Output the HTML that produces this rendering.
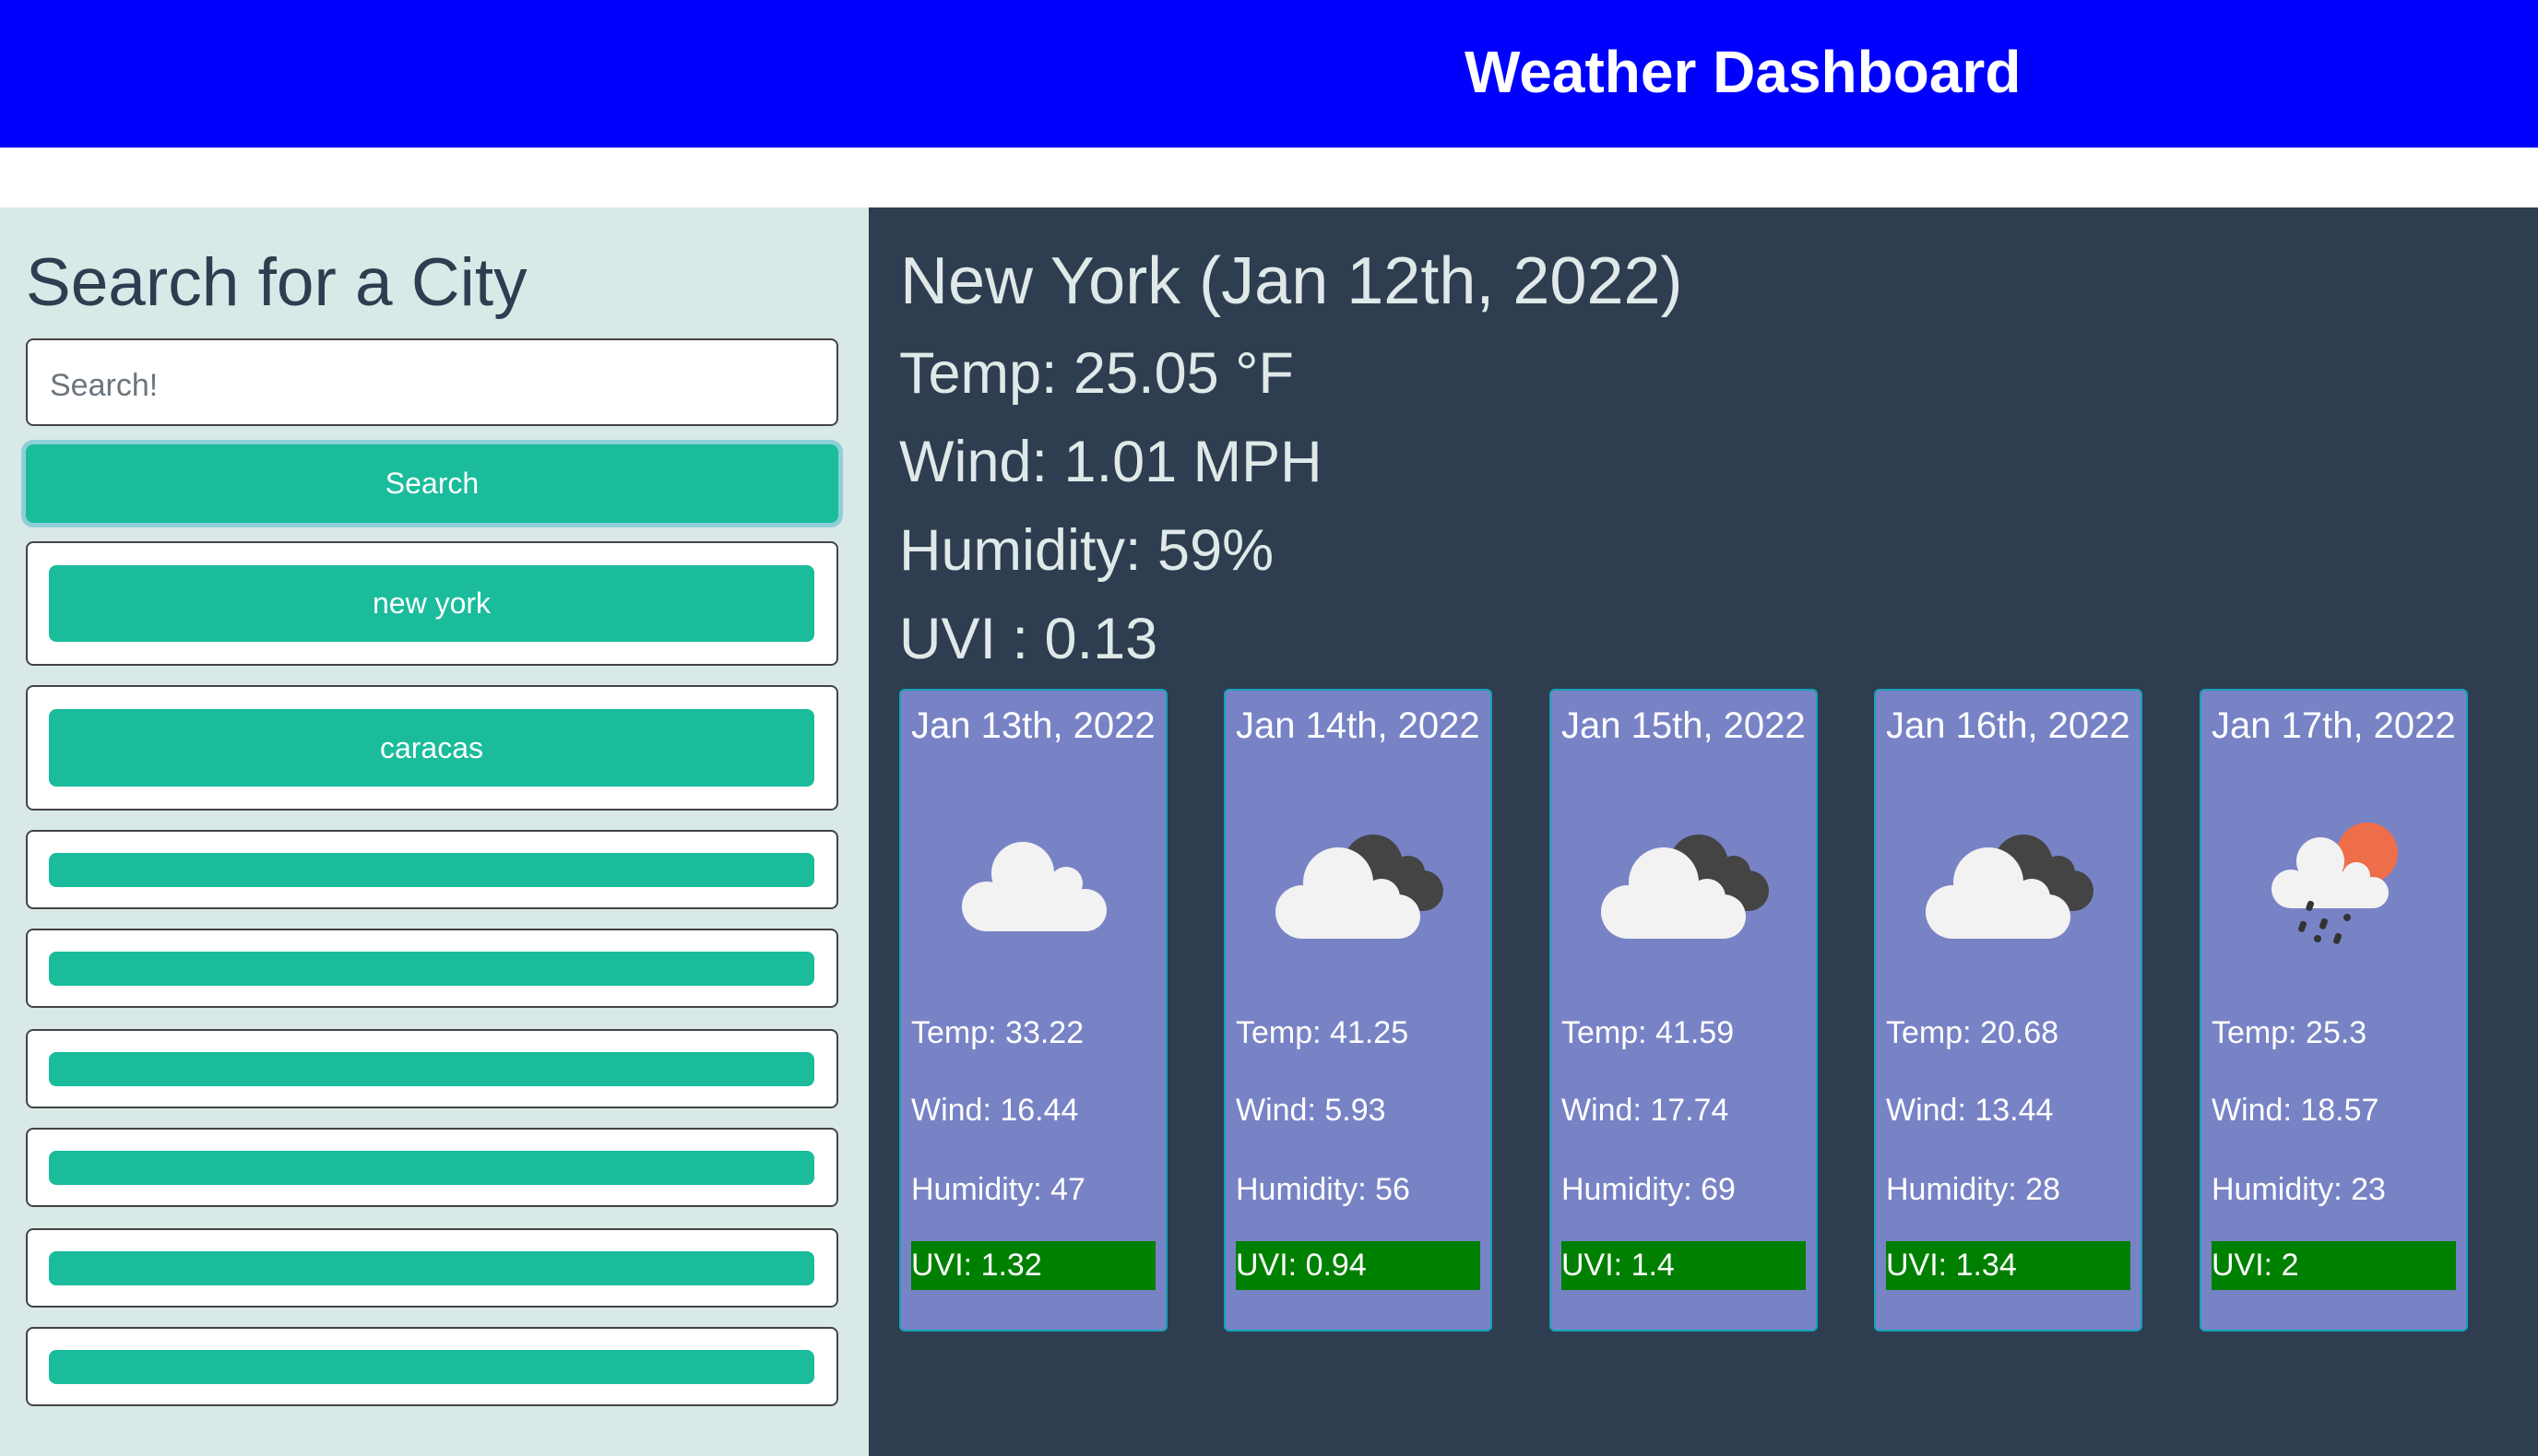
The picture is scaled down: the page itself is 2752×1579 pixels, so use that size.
<!DOCTYPE html>
<html><head><meta charset="utf-8"><style>
*{margin:0;padding:0;box-sizing:border-box}
body{width:2752px;height:1579px;position:relative;overflow:hidden;background:#fff;font-family:"Liberation Sans",sans-serif}
.a{position:absolute;line-height:1;white-space:nowrap}
#hdr{position:absolute;left:0;top:0;width:2752px;height:160px;background:#0000ff}
#left{position:absolute;left:0;top:225px;width:942px;height:1354px;background:#d9e9e7}
#right{position:absolute;left:942px;top:225px;width:1810px;height:1354px;background:#2e3d50}
.box{position:absolute;left:28px;width:881px;background:#fff;border:2px solid #444;border-radius:8px}
.tb{position:absolute;left:53px;width:830px;background:#1abc9c;border-radius:8px;color:#fff;font-size:32px;display:flex;align-items:center;justify-content:center}
.card{position:absolute;top:747px;width:291px;height:697px;background:#7883c6;border:2px solid #17a2b8;border-radius:6px;color:#fff}
.card .d{position:absolute;left:11px;top:18px;font-size:40px;line-height:1;white-space:nowrap}
.card .t{position:absolute;left:11px;font-size:34px;line-height:1;white-space:nowrap}
.card .u{position:absolute;left:11px;top:597px;width:265px;height:53px;background:#008000;font-size:34px;line-height:1;padding-top:9px}
.lt{color:#dfe9e8}
</style></head><body>
<div id="hdr"></div>
<div class="a" style="left:1588px;top:46px;font-size:64px;font-weight:bold;color:#fff">Weather Dashboard</div>
<div id="left"></div>
<div id="right"></div>
<div class="a" style="left:28px;top:270px;font-size:73px;color:#2e3d50">Search for a City</div>
<div class="box" style="top:367px;height:95px;border-radius:8px"></div>
<div class="a" style="left:54px;top:401px;font-size:34px;color:#6c757d">Search!</div>
<div style="position:absolute;left:28px;top:482px;width:881px;height:85px;background:#1abc9c;border-radius:8px;box-shadow:0 0 0 5px #8ecfd8;color:#fff;font-size:32px;display:flex;align-items:center;justify-content:center">Search</div>
<div class="box" style="top:587px;height:135px"></div>
<div class="tb" style="top:613px;height:83px">new york</div>
<div class="box" style="top:743px;height:136px"></div>
<div class="tb" style="top:769px;height:84px">caracas</div>
<div class="box" style="top:900px;height:86px"></div><div class="tb" style="top:925px;height:37px"></div>
<div class="box" style="top:1007px;height:86px"></div><div class="tb" style="top:1032px;height:37px"></div>
<div class="box" style="top:1116px;height:86px"></div><div class="tb" style="top:1141px;height:37px"></div>
<div class="box" style="top:1223px;height:86px"></div><div class="tb" style="top:1248px;height:37px"></div>
<div class="box" style="top:1332px;height:86px"></div><div class="tb" style="top:1357px;height:37px"></div>
<div class="box" style="top:1439px;height:86px"></div><div class="tb" style="top:1464px;height:37px"></div>

<div class="a lt" style="left:976px;top:269px;font-size:72px">New York (Jan 12th, 2022)</div>
<div class="a lt" style="left:975px;top:374px;font-size:63px">Temp: 25.05 °F</div>
<div class="a lt" style="left:975px;top:470px;font-size:63px">Wind: 1.01 MPH</div>
<div class="a lt" style="left:975px;top:566px;font-size:63px">Humidity: 59%</div>
<div class="a lt" style="left:975px;top:662px;font-size:63px">UVI : 0.13</div>

<div class="card" style="left:975px"><div class="d">Jan 13th, 2022</div><div class="t" style="top:354px">Temp: 33.22</div><div class="t" style="top:438px">Wind: 16.44</div><div class="t" style="top:524px">Humidity: 47</div><div class="u">UVI: 1.32</div></div>
<div class="card" style="left:1327px"><div class="d">Jan 14th, 2022</div><div class="t" style="top:354px">Temp: 41.25</div><div class="t" style="top:438px">Wind: 5.93</div><div class="t" style="top:524px">Humidity: 56</div><div class="u">UVI: 0.94</div></div>
<div class="card" style="left:1680px"><div class="d">Jan 15th, 2022</div><div class="t" style="top:354px">Temp: 41.59</div><div class="t" style="top:438px">Wind: 17.74</div><div class="t" style="top:524px">Humidity: 69</div><div class="u">UVI: 1.4</div></div>
<div class="card" style="left:2032px"><div class="d">Jan 16th, 2022</div><div class="t" style="top:354px">Temp: 20.68</div><div class="t" style="top:438px">Wind: 13.44</div><div class="t" style="top:524px">Humidity: 28</div><div class="u">UVI: 1.34</div></div>
<div class="card" style="left:2385px"><div class="d">Jan 17th, 2022</div><div class="t" style="top:354px">Temp: 25.3</div><div class="t" style="top:438px">Wind: 18.57</div><div class="t" style="top:524px">Humidity: 23</div><div class="u">UVI: 2</div></div>

<svg width="2752" height="1579" style="position:absolute;left:0;top:0">
<defs>
<g id="dk"><circle cx="106" cy="33" r="32" fill="#444"/><circle cx="144" cy="42" r="18" fill="#444"/><circle cx="160" cy="62" r="22" fill="#444"/><rect x="106" y="40" width="54" height="44" fill="#444"/></g>
<g id="wc" fill="#f2f2f2"><circle cx="29" cy="85" r="29"/><circle cx="68" cy="53" r="38"/><circle cx="115" cy="69" r="20"/><circle cx="133" cy="90" r="24"/><rect x="29" y="78" width="104" height="36"/><rect x="68" y="62" width="60" height="30"/></g>
</defs>
<g transform="translate(1043,911)" fill="#f2f2f2"><circle cx="27" cy="72" r="27"/><circle cx="66" cy="36" r="34"/><circle cx="113" cy="47" r="18"/><circle cx="134" cy="76" r="23"/><rect x="27" y="68" width="107" height="31"/><rect x="60" y="45" width="70" height="40"/></g>
<g transform="translate(1383,904)"><use href="#dk"/><use href="#wc"/></g>
<g transform="translate(1736,904)"><use href="#dk"/><use href="#wc"/></g>
<g transform="translate(2088,904)"><use href="#dk"/><use href="#wc"/></g>
<circle cx="2567" cy="925" r="33" fill="#ee6e4a"/>
<g fill="#f2f2f2"><circle cx="2484" cy="964" r="21"/><circle cx="2516" cy="934" r="26"/><circle cx="2555" cy="950" r="15"/><circle cx="2573" cy="968" r="17"/><rect x="2484" y="955" width="89" height="30"/><rect x="2510" y="945" width="55" height="25"/></g>
<g fill="#333"><rect x="2501" y="977" width="7" height="11" rx="3" transform="rotate(20 2505 983)"/><rect x="2493" y="999" width="7" height="12" rx="3" transform="rotate(20 2497 1005)"/><rect x="2516" y="996" width="7" height="12" rx="3" transform="rotate(20 2520 1002)"/><circle cx="2545" cy="995" r="4"/><circle cx="2513" cy="1018" r="4"/><rect x="2531" y="1012" width="7" height="12" rx="3" transform="rotate(20 2535 1018)"/></g>
</svg>
</body></html>
